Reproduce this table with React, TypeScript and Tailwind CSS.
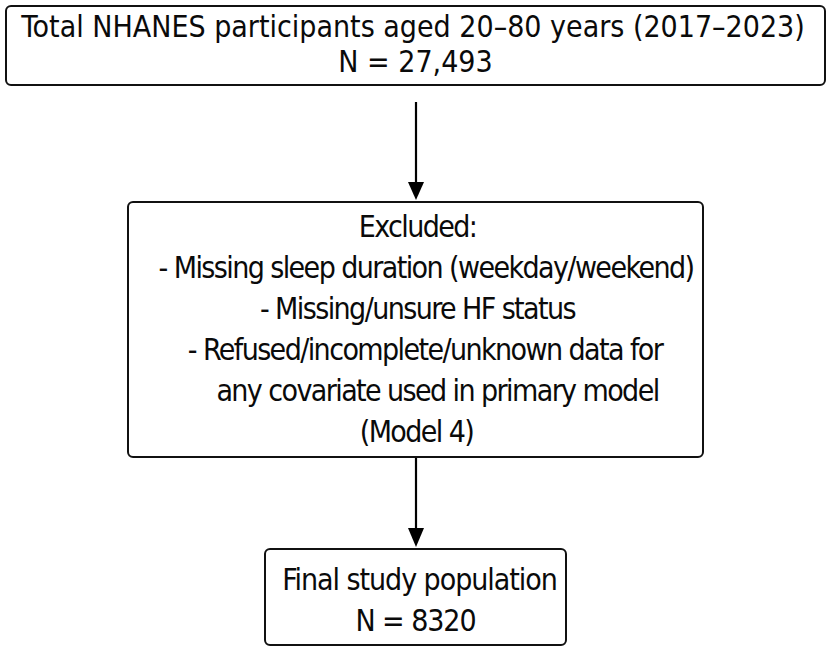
import React from 'react';

type ArrowProps = {
  height: number;
  lineStart: number;
  headStart: number;
};

function DownArrow({ height, lineStart, headStart }: ArrowProps) {
  return (
    <svg width="40" height={height} viewBox={`0 0 40 ${height}`} className="block shrink-0">
      <line x1="20" y1={lineStart} x2="20" y2={headStart + 2} stroke="#000" strokeWidth="2.2" />
      <polygon points={`12,${headStart} 28,${headStart} 20,${height - 1}`} fill="#000" />
    </svg>
  );
}

const excluded: { text: string; shift: string }[] = [
  { text: 'Excluded:', shift: 'ml-[4px]' },
  { text: '- Missing sleep duration (weekday/weekend)', shift: 'ml-[21px]' },
  { text: '- Missing/unsure HF status', shift: 'ml-[4px]' },
  { text: '- Refused/incomplete/unknown data for', shift: 'ml-[19px]' },
  { text: 'any covariate used in primary model', shift: 'ml-[44px]' },
  { text: '(Model 4)', shift: 'ml-[2px]' },
];

export default function App() {
  return (
    <div
      className="flex h-[654px] w-[831px] flex-col items-center bg-white pt-[5px] text-[#0a0a0a]"
      style={{ fontFamily: '"DejaVu Sans Condensed", "DejaVu Sans", sans-serif' }}
    >
      <div className="box-border flex h-[81px] w-[821px] flex-col items-center rounded-[6px] border-2 border-[#111] pt-[2px] text-[30px] leading-[35px] tracking-normal">
        <div className="mr-[5px] whitespace-nowrap">Total NHANES participants aged 20–80 years (2017–2023)</div>
        <div className="whitespace-nowrap">N = 27,493</div>
      </div>

      <DownArrow height={115} lineStart={16} headStart={96} />

      <div className="box-border flex h-[257px] w-[577px] flex-col items-center rounded-[6px] border-2 border-[#111] pt-[3px] text-[30px] leading-[41px] tracking-[-0.053em]">
        {excluded.map((l) => (
          <div key={l.text} className={`whitespace-nowrap ${l.shift}`}>
            {l.text}
          </div>
        ))}
      </div>

      <DownArrow height={90} lineStart={0} headStart={70} />

      <div className="box-border flex h-[98px] w-[303px] flex-col items-center rounded-[6px] border-2 border-[#111] pt-[9px] text-[30px] leading-[41px] tracking-[-0.035em]">
        <div className="ml-[8px] whitespace-nowrap">Final study population</div>
        <div className="whitespace-nowrap">N = 8320</div>
      </div>
    </div>
  );
}
